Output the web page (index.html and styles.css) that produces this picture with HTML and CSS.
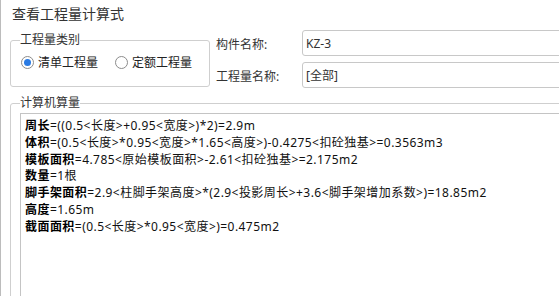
FILE: index.html
```html
<!DOCTYPE html>
<html lang="zh-CN">

<head>
    <meta charset="UTF-8">
    <meta name="viewport" content="width=device-width, initial-scale=1.0">
    <title>查看工程量计算式</title>
    <link rel="stylesheet" href="styles.css">
</head>

<body>
    <div class="window">
        <div class="title">查看工程量计算式</div>

        <div class="top-row">
            <fieldset class="group type-group">
                <legend>工程量类别</legend>
                <div class="radios">
                    <label class="radio-item"><input type="radio" name="kind" checked> 清单工程量</label>
                    <label class="radio-item"><input type="radio" name="kind"> 定额工程量</label>
                </div>
            </fieldset>

            <div class="form">
                <label class="form-label">构件名称:</label>
                <input class="field" type="text" value="KZ-3">
                <label class="form-label">工程量名称:</label>
                <input class="field" type="text" value="[全部]">
            </div>
        </div>

        <fieldset class="group calc-group">
            <legend>计算机算量</legend>
            <div class="calc-box">
                <div><b>周长</b>=((0.5&lt;长度&gt;+0.95&lt;宽度&gt;)*2)=2.9m</div>
                <div><b>体积</b>=(0.5&lt;长度&gt;*0.95&lt;宽度&gt;*1.65&lt;高度&gt;)-0.4275&lt;扣砼独基&gt;=0.3563m3</div>
                <div><b>模板面积</b>=4.785&lt;原始模板面积&gt;-2.61&lt;扣砼独基&gt;=2.175m2</div>
                <div><b>数量</b>=1根</div>
                <div><b>脚手架面积</b>=2.9&lt;柱脚手架高度&gt;*(2.9&lt;投影周长&gt;+3.6&lt;脚手架增加系数&gt;)=18.85m2</div>
                <div><b>高度</b>=1.65m</div>
                <div><b>截面面积</b>=(0.5&lt;长度&gt;*0.95&lt;宽度&gt;)=0.475m2</div>
            </div>
        </fieldset>
    </div>
</body>

</html>
```

FILE: styles.css
```css
* {
    box-sizing: border-box;
}

body {
    margin: 0;
    width: 559px;
    height: 296px;
    overflow: hidden;
    background-color: #fff;
    font-family: "Noto Sans", "Noto Sans CJK SC", sans-serif;
    font-size: 12px;
    color: #333;
}

.window {
    height: 296px;
    overflow: hidden;
    border-left: 1px solid #bcbcbc;
    padding-left: 9px;
}

.title {
    height: 30px;
    line-height: 28px;
    font-size: 14px;
    padding-left: 2px;
}

.top-row {
    display: flex;
    align-items: flex-start;
}

.group {
    margin: 0;
    border: 1px solid #cfcfcf;
    border-radius: 3px;
    padding: 0 0 0 9px;
}

.group legend {
    padding: 0;
    line-height: 14px;
    color: #333;
}

.type-group {
    width: 200px;
    flex-shrink: 0;
    margin-top: 3px;
    padding-top: 5px;
    padding-bottom: 14px;
}

.radios {
    display: flex;
    height: 20px;
    align-items: center;
}

.radio-item {
    display: flex;
    align-items: center;
    width: 94px;
    color: #222;
}

.radio-item input {
    appearance: none;
    width: 13px;
    height: 13px;
    margin: 0 4px 0 1px;
    border: 1px solid #8c8c8c;
    border-radius: 50%;
    display: grid;
    place-items: center;
}

.radio-item input:checked::after {
    content: "";
    width: 7px;
    height: 7px;
    border-radius: 50%;
    background-color: #2a7be4;
}

.form {
    margin-left: 6px;
    display: grid;
    grid-template-columns: 86px 300px;
    grid-auto-rows: 26px;
    row-gap: 6px;
}

.form-label {
    display: flex;
    align-items: center;
    padding-top: 2px;
}

.field {
    font: inherit;
    color: #333;
    height: 26px;
    border: 1px solid #c8c8c8;
    border-radius: 3px;
    padding: 0 3px;
}

.calc-group {
    margin-top: 8px;
    width: 600px;
    padding-top: 3px;
}

.calc-box {
    width: 600px;
    height: 250px;
    border: 1px solid #c4c4c4;
    border-right: none;
    padding: 4px 4px;
    line-height: 16.8px;
    letter-spacing: 0.45px;
    color: #111;
}

.calc-box b {
    color: #000;
}
```
